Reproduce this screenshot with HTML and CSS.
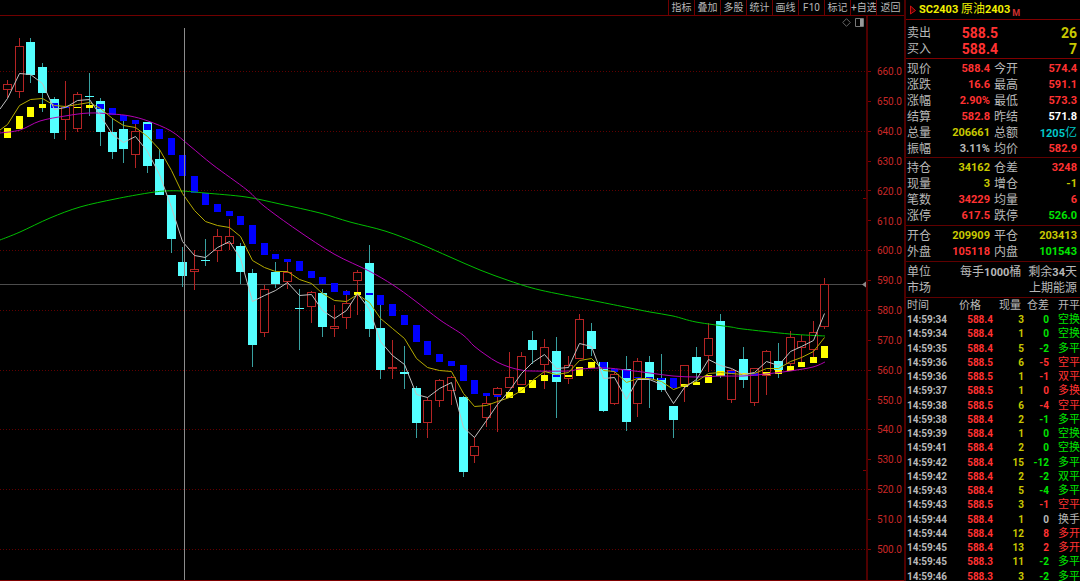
FILE: index.html
```html
<!DOCTYPE html>
<html lang="zh-CN">
<head>
<meta charset="utf-8">
<title>SC2403 原油2403</title>
<link rel="stylesheet" href="styles.css">
</head>
<body>
<div class="terminal">
  <main class="workspace">
    <nav class="toolbar">
      <button type="button">指标</button>
      <button type="button">叠加</button>
      <button type="button">多股</button>
      <button type="button">统计</button>
      <button type="button">画线</button>
      <button type="button">F10</button>
      <button type="button">标记</button>
      <button type="button">+自选</button>
      <button type="button">返回</button>
    </nav>
    <section class="chart">
      <svg class="plot" id="plot" viewBox="0 16 872 564" preserveAspectRatio="none" role="img" aria-label="K线图"></svg>
      <div class="scale">
        <span>660.0</span><span>650.0</span><span>640.0</span><span>630.0</span><span>620.0</span><span>610.0</span><span>600.0</span><span>590.0</span><span>580.0</span><span>570.0</span><span>560.0</span><span>550.0</span><span>540.0</span><span>530.0</span><span>520.0</span><span>510.0</span><span>500.0</span>
      </div>
      <div class="chart-tools">
        <button type="button" aria-label="标记点"><svg width="9" height="9" viewBox="0 0 9 9"><path d="M4.5 .7L8.3 4.5L4.5 8.3L.7 4.5Z" fill="none" stroke="#666"/></svg></button>
        <button type="button" aria-label="侧栏"><svg width="9" height="9" viewBox="0 0 9 9"><path d="M.5 .5h8v8h-8z" fill="none" stroke="#777"/><path d="M5 1h3v7h-3z" fill="#999"/></svg></button>
      </div>
    </section>
  </main>

  <aside class="quote">
    <h1 class="title">
      <svg class="flag" width="8" height="10" viewBox="0 0 8 10"><path d="M1.5 1V9L6.5 5.5Z" fill="#500000" stroke="#d01010"/></svg>
      <span>SC2403 <span class="cn">原油</span>2403</span><sub>M</sub>
    </h1>
    <dl class="depth">
      <dt>卖出</dt><dd class="up">588.5</dd><dd class="vol">26</dd>
      <dt>买入</dt><dd class="up">588.4</dd><dd class="vol">7</dd>
    </dl>
    <dl class="pairs">
      <dt>现价</dt><dd class="up">588.4</dd><dt>今开</dt><dd class="up">574.4</dd>
      <dt>涨跌</dt><dd class="up">16.6</dd><dt>最高</dt><dd class="up">591.1</dd>
      <dt>涨幅</dt><dd class="up">2.90%</dd><dt>最低</dt><dd class="up">573.3</dd>
      <dt>结算</dt><dd class="up">582.8</dd><dt>昨结</dt><dd class="plain">571.8</dd>
      <dt>总量</dt><dd class="vol">206661</dd><dt>总额</dt><dd class="money">1205<span class="cn">亿</span></dd>
      <dt>振幅</dt><dd>3.11%</dd><dt>均价</dt><dd class="up">582.9</dd>
    </dl>
    <dl class="pairs">
      <dt>持仓</dt><dd class="vol">34162</dd><dt>仓差</dt><dd class="up">3248</dd>
      <dt>现量</dt><dd class="vol">3</dd><dt>增仓</dt><dd class="vol">-1</dd>
      <dt>笔数</dt><dd class="up">34229</dd><dt>均量</dt><dd class="up">6</dd>
      <dt>涨停</dt><dd class="up">617.5</dd><dt>跌停</dt><dd class="down">526.0</dd>
    </dl>
    <dl class="pairs">
      <dt>开仓</dt><dd class="vol">209909</dd><dt>平仓</dt><dd class="vol">203413</dd>
      <dt>外盘</dt><dd class="up">105118</dd><dt>内盘</dt><dd class="down">101543</dd>
    </dl>
    <dl class="contract">
      <dt>单位</dt><dd><span>每手<b>1000</b>桶</span><span>剩余<b>34</b>天</span></dd>
      <dt>市场</dt><dd>上期能源</dd>
    </dl>
    <div class="ticks">
      <table>
        <colgroup><col class="c-time"><col class="c-price"><col class="c-vol"><col class="c-diff"><col></colgroup>
        <thead><tr><th>时间</th><th>价格</th><th>现量</th><th>仓差</th><th>开平</th></tr></thead>
        <tbody>
          <tr><td>14:59:34</td><td>588.4</td><td>3</td><td class="down">0</td><td class="down">空换</td></tr>
          <tr><td>14:59:34</td><td>588.4</td><td>1</td><td class="down">0</td><td class="down">空换</td></tr>
          <tr><td>14:59:35</td><td>588.4</td><td>5</td><td class="down">-2</td><td class="down">多平</td></tr>
          <tr><td>14:59:36</td><td>588.5</td><td>6</td><td class="up">-5</td><td class="up">空平</td></tr>
          <tr><td>14:59:36</td><td>588.5</td><td>1</td><td class="up">-1</td><td class="up">双平</td></tr>
          <tr><td>14:59:37</td><td>588.5</td><td>1</td><td class="up">0</td><td class="up">多换</td></tr>
          <tr><td>14:59:38</td><td>588.5</td><td>6</td><td class="up">-4</td><td class="up">空平</td></tr>
          <tr><td>14:59:38</td><td>588.4</td><td>2</td><td class="down">-1</td><td class="down">多平</td></tr>
          <tr><td>14:59:39</td><td>588.4</td><td>1</td><td class="down">0</td><td class="down">空换</td></tr>
          <tr><td>14:59:41</td><td>588.4</td><td>2</td><td class="down">0</td><td class="down">空换</td></tr>
          <tr><td>14:59:42</td><td>588.4</td><td>15</td><td class="down">-12</td><td class="down">多平</td></tr>
          <tr><td>14:59:42</td><td>588.4</td><td>2</td><td class="down">-2</td><td class="down">双平</td></tr>
          <tr><td>14:59:43</td><td>588.4</td><td>5</td><td class="down">-4</td><td class="down">多平</td></tr>
          <tr><td>14:59:43</td><td>588.5</td><td>3</td><td class="up">-1</td><td class="up">空平</td></tr>
          <tr><td>14:59:44</td><td>588.4</td><td>1</td><td>0</td><td>换手</td></tr>
          <tr><td>14:59:44</td><td>588.4</td><td>12</td><td class="up">8</td><td class="up">多开</td></tr>
          <tr><td>14:59:45</td><td>588.4</td><td>13</td><td class="up">2</td><td class="up">多开</td></tr>
          <tr><td>14:59:45</td><td>588.3</td><td>11</td><td class="down">-2</td><td class="down">多平</td></tr>
          <tr><td>14:59:46</td><td>588.3</td><td>3</td><td class="down">-2</td><td class="down">多平</td></tr>
        </tbody>
      </table>
    </div>
  </aside>
</div>
<script src="chart.js"></script>
</body>
</html>
```

FILE: styles.css
```css
* { box-sizing: border-box; }

body {
  margin: 0;
  background: #000;
  color: #b8b8b8;
  font-family: Roboto, "Noto Sans CJK SC", sans-serif;
  font-size: 12px;
  overflow: hidden;
}

button {
  margin: 0;
  padding: 0;
  border: 0;
  background: none;
  color: inherit;
  font: inherit;
}

.terminal {
  display: grid;
  grid-template-columns: minmax(0, 1fr) 176px;
  height: 100vh;
}

.workspace {
  display: flex;
  flex-direction: column;
  min-height: 0;
  border-bottom: 1px solid #800000;
}

.toolbar {
  display: grid;
  grid-template-columns: repeat(8, 26px) 28px;
  justify-content: end;
  height: 16px;
  border-bottom: 1px solid #700000;
}

.toolbar button {
  border-left: 1px solid #700000;
  font-size: 10px;
  line-height: 15px;
  white-space: nowrap;
}

.chart {
  position: relative;
  display: flex;
  flex: 1;
  min-height: 0;
}

.plot {
  display: block;
  flex: 1;
  min-width: 0;
  height: 100%;
}

.scale {
  display: flex;
  flex-direction: column;
  width: 32px;
  padding: 41px 2px 16px 0;
  color: #c82828;
  font-size: 10px;
}

.scale span {
  display: flex;
  flex: 1;
  align-items: center;
  justify-content: flex-end;
}

.chart-tools {
  position: absolute;
  top: 2px;
  right: 40px;
  display: flex;
  gap: 4px;
}

.chart-tools svg { display: block; }

.quote {
  display: flex;
  flex-direction: column;
  min-height: 0;
  border-left: 2px solid #500000;
}

.title {
  display: flex;
  align-items: center;
  height: 20px;
  margin: 0;
  padding-left: 3px;
  border-bottom: 1px solid #800000;
  color: #f0f000;
  font-size: 11px;
  font-weight: 700;
  line-height: 20px;
}

.flag { margin-right: 2px; }

.title sub {
  padding: 6px 0 0 2px;
  color: #d03030;
  font-size: 9px;
  font-weight: 700;
  line-height: 12px;
}

.cn {
  font-size: 12px;
  font-weight: 400;
}

dl {
  display: grid;
  grid-auto-rows: 16px;
  margin: 0;
  padding: 2px 3px 1px 1px;
  border-bottom: 1px solid #600000;
  line-height: 16px;
}

dd {
  margin: 0;
  font-size: 11px;
  font-weight: 700;
  text-align: right;
}

.depth {
  grid-template-columns: auto 1fr 1fr;
  padding-top: 5px;
  border-color: #800000;
}

.depth dd { font-size: 14px; }
.depth dd.up { padding-right: 6px; }

.pairs { grid-template-columns: auto 1fr auto 1fr; }
.pairs dt:nth-of-type(even) { padding-left: 4px; }
.depth + .pairs { padding-bottom: 0; }

.contract { grid-template-columns: auto 1fr; }

.contract dd {
  display: flex;
  justify-content: flex-end;
  gap: 7px;
  font-size: 12px;
  font-weight: 400;
}

.contract b { font-size: 11px; }

.up { color: #ff3232; }
.down { color: #00e600; }
.vol { color: #c8c800; }
.plain { color: #fff; }
.money { color: #00c8c8; }

.ticks {
  flex: 1;
  min-height: 0;
  margin: 1px 0 -3px;
}

.ticks table {
  width: 100%;
  height: 100%;
  border-collapse: collapse;
  table-layout: fixed;
  font-size: 10px;
  line-height: 14px;
}

.c-time { width: 45px; }
.c-price { width: 42px; }
.c-vol { width: 31px; }
.c-diff { width: 25px; }

.ticks th,
.ticks td {
  padding: 0;
  text-align: right;
  white-space: nowrap;
}

.ticks th {
  font-size: 11px;
  font-weight: 400;
}

.ticks td { font-weight: 700; }

.ticks th:first-child,
.ticks td:first-child {
  padding-left: 1px;
  text-align: left;
}

.ticks th:nth-child(2) { padding-right: 12px; }
.ticks th:nth-child(3) { padding-right: 3px; }
.ticks td:nth-child(2) { color: #ff3232; }
.ticks td:nth-child(3) { color: #c8c800; }

.ticks td:last-child {
  font-size: 11px;
  font-weight: 400;
}

.grid {
  stroke: #600000;
  stroke-dasharray: 1 2;
}

.axis { fill: #500000; }
.axis-tick { stroke: #800000; }
.cross-h { stroke: #4c4c4c; }
.cross-v { stroke: #8c8c8c; }
.pointer { fill: #8c8c8c; }
.rise { fill: none; stroke: #b42424; }
.fall-wick { stroke: #38a0a0; }
.fall { fill: #54ffff; }
.bull { fill: #ffff00; }
.bear { fill: #0000ff; }

.ma {
  fill: none;
  stroke-width: 1;
}

.ma5 { stroke: #c0c0c0; }
.ma10 { stroke: #b4aa00; }
.ma20 { stroke: #b400b4; }
.ma60 { stroke: #00be00; }
```

FILE: chart.js
```js
// Candles: [x, high, low, body top, body bottom, direction], in plot units.
const candles = [
  [7,80,98,84,89,1],[19,38,98,46,91,1],[30,38,83,42,75,0],[42,63,112,67,93,0],
  [54,97,139,99,133,0],[65,81,140,107,119,1],[77,92,132,94,128,1],[89,73,116,96,97,0],
  [100,98,146,101,132,0],[112,118,159,132,152,0],[123,121,163,129,149,0],[135,122,168,131,154,1],
  [147,122,173,122,166,0],[159,149,195,159,195,0],[171,195,253,195,239,0],[182,247,287,262,276,0],
  [194,250,290,269,271,1],[205,239,266,260,261,0],[217,229,262,236,250,1],[229,219,250,236,243,1],
  [240,243,284,246,272,0],[252,269,367,273,345,0],[264,285,337,289,332,1],[275,262,288,272,284,0],
  [287,262,289,272,281,1],[299,289,350,308,309,0],[311,291,323,292,306,1],[322,289,337,293,327,0],
  [334,305,337,326,328,1],[346,290,329,303,317,1],[357,270,315,272,280,1],[369,245,337,263,329,0],
  [380,305,379,328,370,0],[392,340,379,367,368,1],[404,346,389,372,374,0],[416,386,438,388,423,0],
  [427,397,438,400,422,1],[439,379,407,380,400,1],[451,376,405,377,390,1],[463,396,477,397,472,0],
  [474,437,463,446,455,1],[486,396,427,403,417,1],[497,387,432,388,394,1],[509,352,388,377,387,1],
  [521,352,385,356,384,1],[532,331,364,340,350,0],[544,339,389,347,364,1],[556,337,418,351,382,0],
  [568,356,384,365,378,1],[579,314,359,319,358,1],[591,323,356,331,349,0],[603,362,412,362,411,0],
  [614,372,405,374,403,1],[626,356,431,369,422,0],[637,358,417,361,403,1],[649,356,408,362,379,0],
  [661,354,392,378,390,0],[673,406,438,406,420,0],[684,365,402,365,385,1],[696,347,385,357,373,0],
  [708,323,372,338,355,1],[720,314,378,321,376,0],[731,369,403,370,399,1],[743,347,388,359,380,0],
  [754,368,406,368,402,1],[766,350,395,351,375,1],[778,343,378,361,370,0],[790,331,370,337,363,1],
  [801,335,362,341,347,1],[813,321,358,332,349,1],[824,278,329,284,326,1]
];

// Trend blocks, one per candle: [top, bottom, bullish].
const blocks = [
  [128,138,1],[116,129,1],[107,117,1],[104,108,1],[103,108,0],[107,108,0],[107,108,1],[105,108,1],
  [104,109,0],[108,115,0],[115,121,0],[120,124,0],[124,130,0],[129,139,0],[138,155,0],[155,176,0],
  [176,193,0],[193,205,0],[204,212,0],[211,216,0],[216,225,0],[225,244,0],[243,255,0],[254,259,0],
  [259,262,0],[261,271,0],[271,278,0],[277,284,0],[283,292,0],[291,295,0],[292,295,1],[293,295,0],
  [295,305,0],[304,316,0],[315,325,0],[325,342,0],[341,355,0],[354,362,0],[361,366,0],[365,381,0],
  [380,394,0],[393,396,0],[395,397,0],[392,398,1],[387,393,1],[380,388,1],[375,381,1],[375,377,0],
  [375,377,1],[367,376,1],[362,368,1],[362,369,0],[369,372,0],[370,378,0],[377,378,0],[377,379,0],
  [378,380,0],[378,388,0],[384,387,1],[382,385,1],[375,383,1],[371,376,1],[371,374,0],[373,375,1],
  [373,376,0],[372,375,1],[370,374,1],[366,371,1],[362,367,1],[357,363,1],[346,358,1]
];

const ma5 = [98,73,74,83,109,107,100,99,115,134,142,136,151,174,207,241,255,257,247,241,258,301,295,290,282,295,294,310,318,310,293,309,341,355,364,394,397,388,382,427,437,420,404,390,373,362,354,368,367,343,346,378,377,399,379,379,384,403,387,379,359,365,368,374,372,361,365,351,346,340,313];
const ma10 = [124,105,99,98,105,106,104,102,108,118,125,127,136,149,170,193,210,221,225,227,236,260,267,271,271,279,283,293,300,301,294,302,318,328,338,358,367,370,371,393,406,405,401,397,390,380,371,374,372,360,358,370,371,382,378,378,381,389,385,381,373,372,373,374,373,368,368,361,357,351,337];
const ma20 = [[0,133],[20,130],[40,121],[65,116],[89,113],[112,114],[130,116],[148,121],[171,131],[190,146],[213,165],[247,190],[264,206],[297,230],[334,254],[369,271],[393,285],[414,300],[440,320],[463,335],[474,346],[486,355],[497,362],[509,367],[521,370],[532,371],[568,371],[580,369],[605,368],[626,370],[650,373],[673,376],[697,377],[720,376],[743,376],[766,374],[790,371],[813,367],[825,362]];
const ma60 = [[0,240],[20,232],[50,218],[80,207],[115,199],[148,193],[165,191],[182,191],[205,193],[246,197],[280,204],[320,213],[350,222],[385,231],[420,244],[450,257],[480,270],[510,281],[540,290],[590,300],[625,307],[650,312],[673,316],[696,322],[731,327],[743,329],[790,334],[825,336]];

const out = [];
const path = (cls, d, crisp = true) =>
  out.push(`<path class="${cls}" d="${d}"${crisp ? ' shape-rendering="crispEdges"' : ""}/>`);

const levels = Array.from({ length: 17 }, (_, i) => Math.round(71 + i * 29.86) + 0.5);
path("grid", levels.filter((_, i) => i % 2 === 0).map(y => `M0 ${y}H866`).join(""));
path("axis", "M866 16h2v564h-2z");
path("axis-tick", levels.map(y => `M868 ${y}h3`).join("") + "M863 198.5h3M863 470.5h3");
path("cross-h", "M0 284.5H864");
path("pointer", "M862 284.5l4 -3v6z", false);

let rise = "", wick = "", fall = "";
for (const [x, hi, lo, top, bottom, up] of candles) {
  const c = x + 0.5;
  if (up) {
    rise += `M${c} ${hi}V${top}M${c} ${bottom + 1}V${lo}M${c - 4} ${top + 0.5}h8V${bottom + 0.5}h-8z`;
  } else {
    wick += `M${c} ${hi}V${lo}`;
    fall += `M${x - 4} ${top}h9V${bottom}h-9z`;
  }
}
path("rise", rise);
path("fall-wick", wick);
path("fall", fall);

const blockPath = bull => blocks
  .map(([top, bottom, b], i) => b === bull ? `M${candles[i][0] - 3} ${top}h7V${bottom}h-7z` : "")
  .join("");
path("bear", blockPath(0));
path("bull", blockPath(1));

// Smooth curve through the points of a slow average.
const curve = pts => {
  let d = `M${pts[0]}`;
  for (let i = 0; i < pts.length - 1; i++) {
    const a = pts[i - 1] || pts[i], b = pts[i], c = pts[i + 1], e = pts[i + 2] || c;
    d += `C${b[0] + (c[0] - a[0]) / 6} ${b[1] + (c[1] - a[1]) / 6} ` +
         `${c[0] - (e[0] - b[0]) / 6} ${c[1] - (e[1] - b[1]) / 6} ${c[0]} ${c[1]}`;
  }
  return d;
};
const line = (start, ys) => `M0 ${start}` + ys.map((y, i) => `L${candles[i][0] + 0.5} ${y + 0.5}`).join("");
path("ma ma60", curve(ma60), false);
path("ma ma20", curve(ma20), false);
path("ma ma10", line(130, ma10), false);
path("ma ma5", line(109, ma5), false);
path("cross-v", "M184.5 28V580");

document.getElementById("plot").innerHTML = out.join("");
```
